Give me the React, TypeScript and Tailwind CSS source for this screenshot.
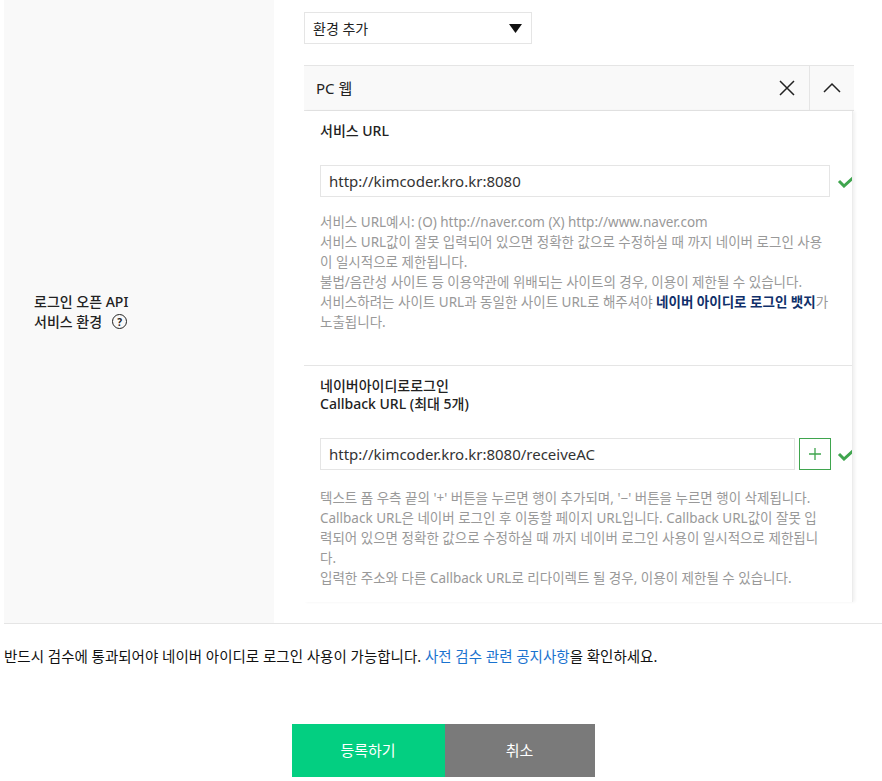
import React from "react";

const font = { fontFamily: '"Noto Sans", "Noto Sans CJK KR", sans-serif' };

function Check() {
  return (
    <svg width="18" height="14" viewBox="0 0 18 14" className="shrink-0">
      <polyline points="2,7 7,12 17,3" fill="none" stroke="#3fa54e" strokeWidth="3" strokeLinejoin="miter" />
    </svg>
  );
}

export default function App() {
  return (
    <div className="w-[882px] bg-white pl-[4px] text-[#222]" style={font}>
      <div className="flex border-b border-[#e5e5e5]">
        <div className="flex w-[270px] shrink-0 items-center bg-[#f9f9f9] pl-[30px]">
          <div className="text-[14px] leading-[20px] font-medium text-[#222]">
            <div>로그인 오픈 API</div>
            <div className="flex items-center">
              서비스 환경
              <span className="ml-[10px] inline-flex h-[15px] w-[15px] items-center justify-center rounded-full border-[1.5px] border-[#222] text-[10px] leading-none font-bold">?</span>
            </div>
          </div>
        </div>
        <div className="pl-[30px] pt-[12px] pb-[21px]">
          <div className="flex h-[32px] w-[228px] items-center justify-between border border-[#e5e5e5] pl-[8px] pr-[9px] text-[14px]">
            <span>환경 추가</span>
            <svg width="13" height="9" viewBox="0 0 13 9"><polygon points="0,0 13,0 6.5,9" fill="#111" /></svg>
          </div>
          <div className="mt-[21px] w-[550px]">
            <div className="flex h-[46px] items-stretch border-y border-[#e5e5e5] bg-[#f9f9f9]">
              <div className="flex flex-1 items-center pl-[12px] text-[15px]">PC 웹</div>
              <div className="flex w-[45px] items-center justify-center">
                <svg width="18" height="18" viewBox="0 0 18 18"><path d="M2 2L16 16M16 2L2 16" stroke="#222" strokeWidth="1.5" /></svg>
              </div>
              <div className="flex w-[45px] items-center justify-center border-l border-[#e5e5e5]">
                <svg width="20" height="12" viewBox="0 0 20 12"><path d="M2 10L10 2L18 10" fill="none" stroke="#222" strokeWidth="1.5" /></svg>
              </div>
            </div>
            <div className="h-[491px] w-[549px] overflow-hidden border-r border-[#ececec] shadow-[2px_0_3px_rgba(0,0,0,0.06)]">
              <div className="border-b border-[#e5e5e5] px-[16px] pt-[10px] pb-[33px]">
                <div className="text-[14px] leading-[20px] font-medium">서비스 URL</div>
                <div className="mt-[24px] flex items-center gap-[7px]">
                  <div className="flex h-[32px] w-[510px] shrink-0 items-center border border-[#e5e5e5] px-[8px] text-[15px] text-[#333]">http://kimcoder.kro.kr:8080</div>
                  <Check />
                </div>
                <div className="mt-[15px] text-[13.5px] leading-[20px] whitespace-nowrap text-[#999]">
                  서비스 URL예시: (O) http://naver.com (X) http://www.naver.com<br />
                  서비스 URL값이 잘못 입력되어 있으면 정확한 값으로 수정하실 때 까지 네이버 로그인 사용<br />
                  이 일시적으로 제한됩니다.<br />
                  불법/음란성 사이트 등 이용약관에 위배되는 사이트의 경우, 이용이 제한될 수 있습니다.<br />
                  서비스하려는 사이트 URL과 동일한 사이트 URL로 해주셔야 <b className="font-bold text-[#10306a]">네이버 아이디로 로그인 뱃지</b>가<br />
                  노출됩니다.
                </div>
              </div>
              <div className="px-[16px] pt-[11px]">
                <div className="text-[14px] leading-[18px] font-medium">
                  네이버아이디로로그인<br />Callback URL (최대 5개)
                </div>
                <div className="mt-[25px] flex items-center">
                  <div className="flex h-[32px] w-[475px] shrink-0 items-center border border-[#e5e5e5] px-[8px] text-[15px] text-[#333]">http://kimcoder.kro.kr:8080/receiveAC</div>
                  <div className="ml-[4px] flex h-[32px] w-[32px] shrink-0 items-center justify-center border border-[#3fa54e]">
                    <svg width="14" height="14" viewBox="0 0 14 14"><path d="M7 1V13M1 7H13" stroke="#3fa54e" strokeWidth="1.3" /></svg>
                  </div>
                  <div className="ml-[6px]"><Check /></div>
                </div>
                <div className="mt-[18px] text-[13.5px] leading-[20px] whitespace-nowrap text-[#999]">
                  텍스트 폼 우측 끝의 '+' 버튼을 누르면 행이 추가되며, '−' 버튼을 누르면 행이 삭제됩니다.<br />
                  Callback URL은 네이버 로그인 후 이동할 페이지 URL입니다. Callback URL값이 잘못 입<br />
                  력되어 있으면 정확한 값으로 수정하실 때 까지 네이버 로그인 사용이 일시적으로 제한됩니<br />
                  다.<br />
                  입력한 주소와 다른 Callback URL로 리다이렉트 될 경우, 이용이 제한될 수 있습니다.
                </div>
              </div>
            </div>
          </div>
        </div>
      </div>
      <div className="mt-[22px] text-[14.5px] leading-[20px] text-[#111]">
        반드시 검수에 통과되어야 네이버 아이디로 로그인 사용이 가능합니다. <span className="text-[#1a73cf]">사전 검수 관련 공지사항</span>을 확인하세요.
      </div>
      <div className="mt-[58px] flex justify-center pb-[4px]">
        <div className="flex h-[53px] w-[153px] items-center justify-center bg-[#03cf81] text-[15px] text-white">등록하기</div>
        <div className="flex h-[53px] w-[150px] items-center justify-center bg-[#7a7a7a] text-[15px] text-white">취소</div>
      </div>
    </div>
  );
}
